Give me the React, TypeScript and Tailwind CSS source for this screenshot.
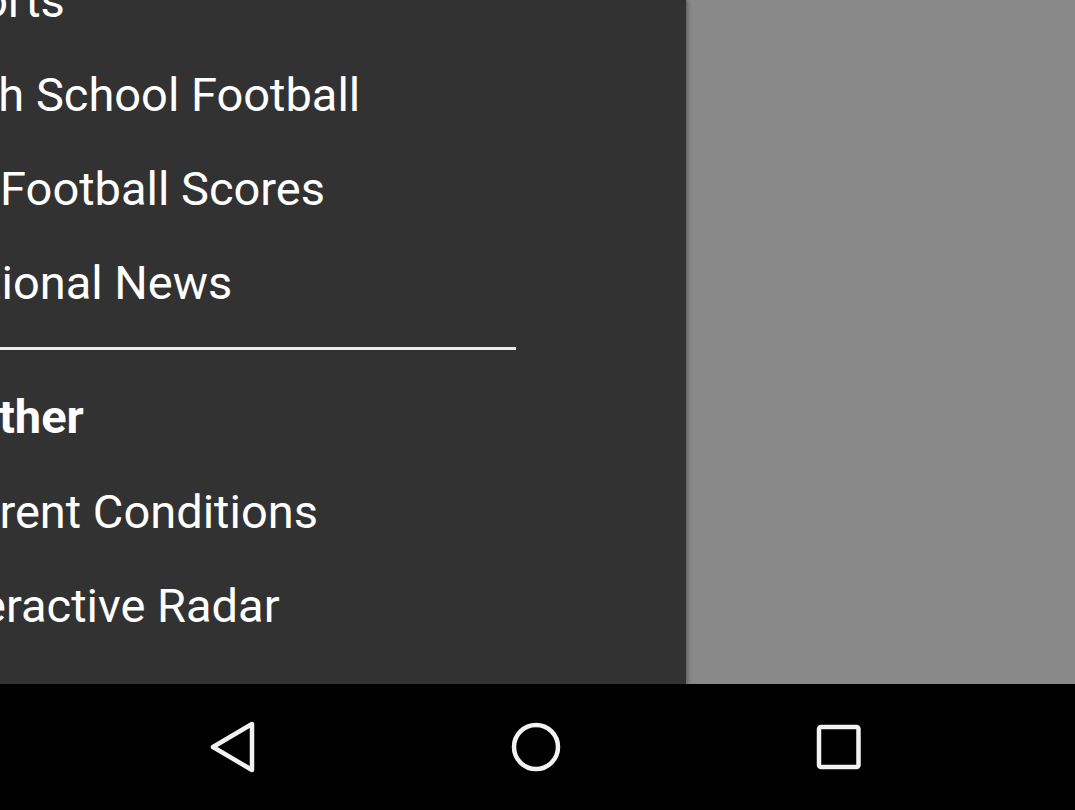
import React from "react";

const items: { label: string; heading?: boolean; divider?: boolean }[] = [
  { label: "Sports" },
  { label: "High School Football" },
  { label: "HS Football Scores" },
  { label: "National News", divider: true },
  { label: "Weather", heading: true },
  { label: "Current Conditions" },
  { label: "Interactive Radar" },
];

function NavBar() {
  return (
    <div className="h-[126px] bg-black flex items-center justify-between pl-[208px] pr-[213px]">
      <svg width="50" height="54" viewBox="0 0 50 54" fill="none">
        <path
          d="M44 4 L44 50 L5 27 Z"
          stroke="#f2f2f2"
          strokeWidth="4.5"
          strokeLinejoin="round"
        />
      </svg>
      <svg width="54" height="54" viewBox="0 0 54 54" fill="none">
        <circle cx="26" cy="27" r="22" stroke="#f2f2f2" strokeWidth="4.5" />
      </svg>
      <svg width="46" height="46" viewBox="0 0 46 46" fill="none">
        <rect x="3" y="3" width="39.5" height="40" rx="2" stroke="#f2f2f2" strokeWidth="4.5" />
      </svg>
    </div>
  );
}

export default function App() {
  return (
    <div
      className="w-[1075px] h-[810px] flex flex-col overflow-hidden"
      style={{ fontFamily: "Roboto, 'Noto Sans', sans-serif" }}
    >
      <div className="flex-1 flex overflow-hidden">
        <div className="w-[686px] bg-[#323232] overflow-hidden shadow-[2px_0_4px_rgba(0,0,0,0.3)] z-10">
          <div className="-mt-[46px] -ml-[73px]">
            {items.map((item) => (
              <div key={item.label}>
                {item.heading ? (
                  <div className="-mt-[1px] mb-[1px] -ml-[19px] text-[47px] leading-[94px] text-white font-bold whitespace-nowrap">
                    {item.label}
                  </div>
                ) : (
                  <div className="text-[47px] leading-[94px] text-white whitespace-nowrap">
                    {item.label}
                  </div>
                )}
                {item.divider && (
                  <div className="h-[3px] bg-[#ececec] w-[589px] mt-[17px] mb-[21px]" />
                )}
              </div>
            ))}
          </div>
        </div>
        <div className="flex-1 bg-[#898989]" />
      </div>
      <NavBar />
    </div>
  );
}
